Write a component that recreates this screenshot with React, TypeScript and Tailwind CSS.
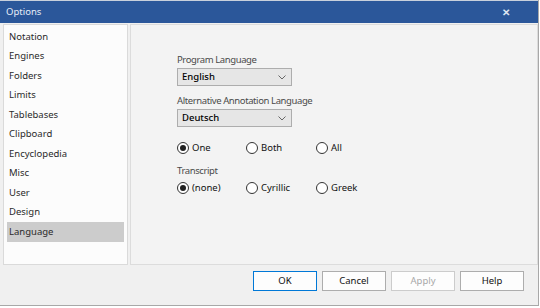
const navItems = [
  'Notation',
  'Engines',
  'Folders',
  'Limits',
  'Tablebases',
  'Clipboard',
  'Encyclopedia',
  'Misc',
  'User',
  'Design',
  'Language',
]

function Radio({ label, checked, className = '' }: { label: string; checked?: boolean; className?: string }) {
  return (
    <div className={`flex items-center gap-[3px] ${className}`}>
      <span className="w-[12px] h-[12px] rounded-full border border-[#333] bg-white flex items-center justify-center">
        {checked && <span className="w-[6px] h-[6px] rounded-full bg-[#222]" />}
      </span>
      <span className="text-[9.5px] text-[#111]">{label}</span>
    </div>
  )
}

function Select({ value }: { value: string }) {
  return (
    <div className="w-[115px] h-[18px] bg-[#e6e6e6] border border-[#adadad] flex items-center justify-between pl-[4px] pr-[5px]">
      <span className="text-[9.5px] font-medium text-black">{value}</span>
      <svg width="8" height="5" viewBox="0 0 8 5" fill="none" stroke="#666" strokeWidth="1">
        <path d="M0.5 0.5 L4 4 L7.5 0.5" />
      </svg>
    </div>
  )
}

function Button({ label, variant }: { label: string; variant?: 'default' | 'disabled' }) {
  const border =
    variant === 'default' ? 'border-[#0078d7]' : variant === 'disabled' ? 'border-[#cccccc]' : 'border-[#adadad]'
  const text = variant === 'disabled' ? 'text-[#a8a8a8]' : 'text-[#111]'
  return (
    <div className={`w-[64px] h-[20px] bg-[#fdfdfd] border ${border} flex items-center justify-center`}>
      <span className={`text-[9.5px] ${text}`}>{label}</span>
    </div>
  )
}

export default function App() {
  return (
    <div className="w-[540px] h-[308px] bg-white" style={{ fontFamily: '"Noto Sans", "Open Sans", sans-serif' }}>
      <div className="w-[539px] h-[306px] bg-[#f0f0f0] border-r border-b border-[#a8a8a8] flex flex-col">
        <div className="h-[23px] bg-[#2b579a] border-t border-[#c8d0dc] flex items-center justify-between pl-[6px] pr-[28px]">
          <span className="text-[9.5px] text-[#e8eef8]">Options</span>
          <span className="text-[10px] leading-none font-bold text-[#dfe6f2]">✕</span>
        </div>
        <div className="flex h-[242px] pl-[3px] pt-[1px]">
          <div className="w-[125px] h-full bg-[#fcfcfc] border border-[#dadada] pt-[2px] px-[3px]">
            {navItems.map(item => (
              <div
                key={item}
                className={`h-[19.5px] flex items-center pl-[2px] text-[9.5px] text-[#2a2a2a] ${item === 'Language' ? 'bg-[#cccccc]' : ''}`}
              >
                {item}
              </div>
            ))}
          </div>
          <div className="w-[2px]" />
          <div className="flex-1 h-[241px] bg-[#f3f3f3] border border-[#dcdcdc] pl-[46px] pt-[28px] flex flex-col">
            <span className="text-[9.5px] tracking-[-0.4px] text-[#4a4a4a] leading-[14px]">Program Language</span>
            <div className="mt-[1px]">
              <Select value="English" />
            </div>
            <span className="text-[9.5px] tracking-[-0.4px] text-[#4a4a4a] leading-[14px] mt-[8px]">
              Alternative Annotation Language
            </span>
            <div className="mt-[1px]">
              <Select value="Deutsch" />
            </div>
            <div className="flex mt-[14px] h-[14px]">
              <Radio label="One" checked className="w-[69px]" />
              <Radio label="Both" className="w-[70px]" />
              <Radio label="All" />
            </div>
            <span className="text-[9.5px] tracking-[-0.4px] text-[#4a4a4a] leading-[14px] mt-[9px]">Transcript</span>
            <div className="flex mt-[3px] h-[14px]">
              <Radio label="(none)" checked className="w-[69px]" />
              <Radio label="Cyrillic" className="w-[70px]" />
              <Radio label="Greek" />
            </div>
          </div>
        </div>
        <div className="flex justify-end gap-[5px] pr-[14px] pt-[6px]">
          <Button label="OK" variant="default" />
          <Button label="Cancel" />
          <Button label="Apply" variant="disabled" />
          <Button label="Help" />
        </div>
      </div>
    </div>
  )
}
